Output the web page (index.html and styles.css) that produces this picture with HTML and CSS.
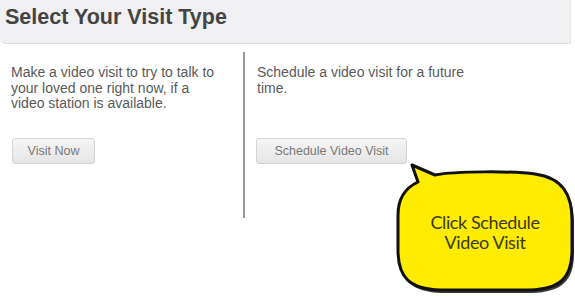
FILE: index.html
```html
<!DOCTYPE html>
<html>
<head>
<meta charset="utf-8">
<link rel="stylesheet" href="styles.css">
</head>
<body>
<header class="header"><h1 class="title">Select Your Visit Type</h1></header>
<main class="types">
  <section class="col col-left">
    <p class="desc">Make a video visit to try to talk to your loved one right now, if a video station is available.</p>
    <button class="btn btn-now">Visit Now</button>
  </section>
  <section class="col col-right">
    <p class="desc desc-right">Schedule a video visit for a future time.</p>
    <button class="btn btn-schedule">Schedule Video Visit</button>
  </section>
</main>
<div class="bubble">
  <svg class="bubble-shape" width="180" height="137" viewBox="0 0 180 137">
    <path d="M 40 15 C 60 11 120 11 140 14 C 168 18 177 35 177 60 L 177 90 C 177 118 165 129 135 130 L 45 130 C 15 129 3 118 3 90 L 3 55 C 3 38 10 28 23 22 L 17 5 Z" fill="#3a3a3a" transform="translate(2,3)"/>
    <path d="M 40 15 C 60 11 120 11 140 14 C 168 18 177 35 177 60 L 177 90 C 177 118 165 129 135 130 L 45 130 C 15 129 3 118 3 90 L 3 55 C 3 38 10 28 23 22 L 17 5 Z" fill="#ffec00" stroke="#111" stroke-width="3" stroke-linejoin="round"/>
  </svg>
  <div class="bubble-text">Click Schedule<br>Video Visit</div>
</div>
</body>
</html>
```
FILE: styles.css
```css
html, body {
  margin: 0;
  padding: 0;
  background: #fff;
  font-family: "Liberation Sans", Arial, sans-serif;
}
.header {
  height: 43px;
  margin-right: 4px;
  background: #f0f0f2;
  border-bottom: 1px solid #e2e2e4;
  border-right: 1px solid #e8e8ea;
  border-bottom-left-radius: 6px;
}
.title {
  margin: 0;
  padding: 4px 0 0 5px;
  font-size: 21.5px;
  line-height: 26px;
  font-weight: bold;
  color: #444;
}
.types {
  display: grid;
  grid-template-columns: 243px 260px;
  margin-top: 8px;
}
.col {
  height: 166px;
  padding-top: 13px;
  box-sizing: border-box;
}
.col-left {
  padding-left: 11px;
}
.col-right {
  border-left: 2px solid #9a9a9a;
  padding-left: 12px;
}
.desc {
  margin: 0;
  width: 208px;
  height: 47px;
  font-size: 14px;
  line-height: 15.5px;
  color: #5a5a5a;
}
.desc-right {
  width: 214px;
}
.btn {
  display: block;
  margin-top: 26px;
  height: 26px;
  padding: 0;
  font-family: "Liberation Sans", Arial, sans-serif;
  font-size: 12.5px;
  color: #7a7a7a;
  background: linear-gradient(#f6f6f6, #e5e5e5);
  border: 1px solid #d4d4d4;
  border-radius: 3px;
}
.btn-now {
  margin-left: 1px;
  width: 83px;
}
.btn-schedule {
  margin-left: -1px;
  width: 151px;
}
.bubble {
  position: absolute;
  left: 395px;
  top: 160px;
  width: 180px;
  height: 137px;
}
.bubble-shape {
  display: block;
}
.bubble-text {
  position: absolute;
  left: 2px;
  top: 52px;
  width: 176px;
  text-align: center;
  font-family: Lato, "Open Sans", sans-serif;
  font-size: 18px;
  line-height: 20px;
  color: #3b3a14;
  letter-spacing: -0.4px;
}
```
